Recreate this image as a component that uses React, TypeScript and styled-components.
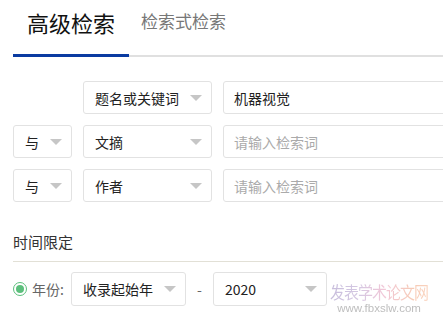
import React from 'react';
import styled, { createGlobalStyle } from 'styled-components';

const GlobalStyle = createGlobalStyle`
  html, body {
    margin: 0;
    padding: 0;
    background: #fff;
    overflow: hidden;
  }
  body {
    font-family: "Noto Sans CJK SC", "Liberation Sans", sans-serif;
    color: #333;
  }
`;

const Page = styled.div`
  position: relative;
  width: 443px;
  height: 321px;
  padding-left: 13px;
  box-sizing: border-box;
  overflow: hidden;
`;

const Tabs = styled.div`
  display: flex;
  align-items: flex-end;
  height: 57px;
  width: 460px;
  border-bottom: 2px solid #e0e0e0;
  box-sizing: border-box;
`;

const Tab = styled.div<{ $active?: boolean }>`
  position: relative;
  height: 100%;
  display: flex;
  align-items: center;
  padding: ${p => (p.$active ? '0 14px 12px' : '0 12px 15px')};
  box-sizing: border-box;
  font-size: ${p => (p.$active ? '22px' : '17px')};
  color: ${p => (p.$active ? '#111' : '#777')};
  line-height: 1;

  &::after {
    content: '';
    display: ${p => (p.$active ? 'block' : 'none')};
    position: absolute;
    left: 0;
    right: 0;
    bottom: -2px;
    height: 3px;
    background: #0a3ba1;
  }
`;

const Rows = styled.div`
  display: flex;
  flex-direction: column;
  gap: 11px;
  margin-top: 24px;
`;

const Row = styled.div`
  display: flex;
  gap: 11px;
  height: 33px;
`;

const Box = styled.div<{ $w: number; $hidden?: boolean }>`
  flex: 0 0 ${p => p.$w}px;
  height: 100%;
  border: 1px solid ${p => (p.$hidden ? 'transparent' : '#e2e2e2')};
  border-radius: 3px;
  box-sizing: border-box;
  display: flex;
  align-items: center;
  justify-content: space-between;
  padding: 0 9px 0 11px;
  font-size: 14px;
  color: #222;
  visibility: ${p => (p.$hidden ? 'hidden' : 'visible')};
`;

const Arrow = styled.span`
  width: 0;
  height: 0;
  border-left: 6px solid transparent;
  border-right: 6px solid transparent;
  border-top: 6px solid #c6c6c6;
`;

const Input = styled.div<{ $placeholder?: boolean }>`
  flex: 0 0 260px;
  height: 100%;
  border: 1px solid #e2e2e2;
  border-radius: 3px;
  box-sizing: border-box;
  display: flex;
  align-items: center;
  padding-left: 10px;
  font-size: 14px;
  color: ${p => (p.$placeholder ? '#aaa' : '#222')};
`;

const SectionTitle = styled.div`
  margin-top: 30px;
  width: 440px;
  font-size: 15px;
  color: #333;
  line-height: 20px;
  padding-bottom: 9px;
  border-bottom: 1px solid #e2e0d6;
`;

const YearRow = styled.div`
  display: flex;
  align-items: center;
  height: 34px;
  margin-top: 10px;
`;

const Radio = styled.span`
  width: 14px;
  height: 14px;
  border: 1.5px solid #5cbf7c;
  border-radius: 50%;
  box-sizing: border-box;
  display: flex;
  align-items: center;
  justify-content: center;

  &::after {
    content: '';
    width: 8px;
    height: 8px;
    border-radius: 50%;
    background: #5cbf7c;
  }
`;

const Label = styled.span`
  margin: 0 7px 0 5px;
  font-size: 14px;
  color: #666;
`;

const Dash = styled.span`
  width: 27px;
  text-align: center;
  color: #666;
  font-size: 14px;
`;

const Watermark = styled.div`
  position: absolute;
  left: 329px;
  top: 283px;
  width: 100px;
  display: flex;
  flex-direction: column;
  align-items: center;
  gap: 2px;
  opacity: 0.55;
`;

const WatermarkName = styled.span`
  font-size: 15px;
  line-height: 17px;
  letter-spacing: -1px;
  transform: scaleY(1.1);
  background: linear-gradient(90deg, #9a88c0 0%, #b49ccc 30%, #e69ab8 55%, #f0a07a 85%, #f6b08a 100%);
  -webkit-background-clip: text;
  background-clip: text;
  color: transparent;
`;

const WatermarkUrl = styled.span`
  font-family: "Liberation Sans", sans-serif;
  font-size: 11.5px;
  line-height: 12px;
  color: #888;
`;

export default function App() {
  return (
    <>
      <GlobalStyle />
      <Page>
        <Tabs>
          <Tab $active>高级检索</Tab>
          <Tab>检索式检索</Tab>
        </Tabs>
        <Rows>
          <Row>
            <Box $w={59} $hidden>与<Arrow /></Box>
            <Box $w={129}>题名或关键词<Arrow /></Box>
            <Input>机器视觉</Input>
          </Row>
          <Row>
            <Box $w={59}>与<Arrow /></Box>
            <Box $w={129}>文摘<Arrow /></Box>
            <Input $placeholder>请输入检索词</Input>
          </Row>
          <Row>
            <Box $w={59}>与<Arrow /></Box>
            <Box $w={129}>作者<Arrow /></Box>
            <Input $placeholder>请输入检索词</Input>
          </Row>
        </Rows>
        <SectionTitle>时间限定</SectionTitle>
        <YearRow>
          <Radio />
          <Label>年份:</Label>
          <Box $w={115}>收录起始年<Arrow /></Box>
          <Dash>-</Dash>
          <Box $w={114}>2020<Arrow /></Box>
        </YearRow>
        <Watermark>
          <WatermarkName>发表学术论文网</WatermarkName>
          <WatermarkUrl>www.fbxslw.com</WatermarkUrl>
        </Watermark>
      </Page>
    </>
  );
}
